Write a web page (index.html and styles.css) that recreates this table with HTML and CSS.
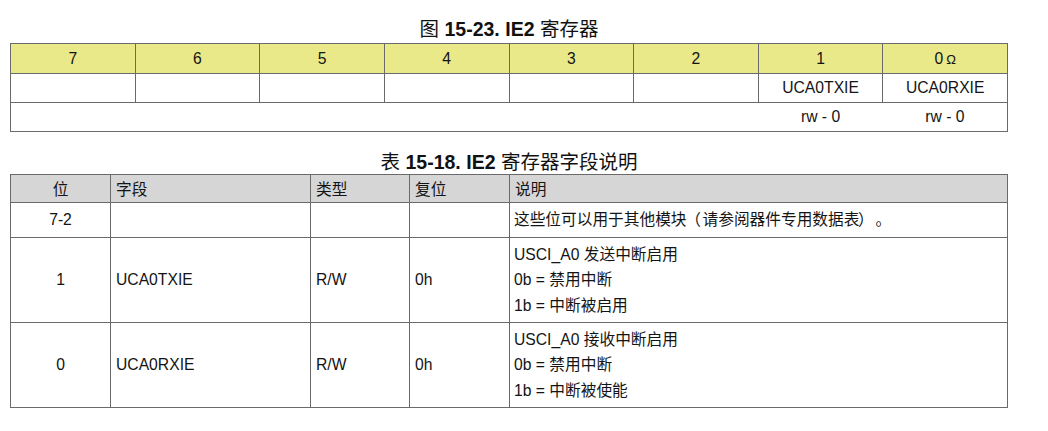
FILE: index.html
```html
<!DOCTYPE html>
<html lang="zh-CN">
<head>
<meta charset="utf-8">
<title>IE2 寄存器</title>
<link rel="stylesheet" href="styles.css">
</head>
<body>
<div class="page">
  <h2 class="caption caption-fig">图 <b>15-23. IE2</b> 寄存器</h2>
  <table class="reg">
    <colgroup>
      <col><col><col><col><col><col><col><col>
    </colgroup>
    <tr class="bits">
      <td>7</td><td>6</td><td>5</td><td>4</td><td>3</td><td>2</td><td>1</td><td>0<span class="ohm">Ω</span></td>
    </tr>
    <tr class="names">
      <td></td><td></td><td></td><td></td><td></td><td></td><td>UCA0TXIE</td><td>UCA0RXIE</td>
    </tr>
    <tr class="access">
      <td></td><td></td><td></td><td></td><td></td><td></td><td>rw - 0</td><td>rw - 0</td>
    </tr>
  </table>

  <h2 class="caption caption-tab">表 <b>15-18. IE2</b> 寄存器字段说明</h2>
  <table class="fields">
    <colgroup>
      <col class="c-bit"><col class="c-field"><col class="c-type"><col class="c-reset"><col class="c-desc">
    </colgroup>
    <thead>
      <tr>
        <th class="center">位</th><th>字段</th><th>类型</th><th>复位</th><th>说明</th>
      </tr>
    </thead>
    <tbody>
      <tr class="row-short">
        <td class="center">7-2</td><td></td><td></td><td></td><td class="desc">这些位可以用于其他模块<span class="paren">（</span>请参阅器件专用数据表<span class="paren">）</span>。</td>
      </tr>
      <tr class="row-tall">
        <td class="center">1</td><td>UCA0TXIE</td><td>R/W</td><td>0h</td>
        <td class="desc">USCI_A0 发送中断启用<br>0b = 禁用中断<br>1b = 中断被启用</td>
      </tr>
      <tr class="row-tall">
        <td class="center">0</td><td>UCA0RXIE</td><td>R/W</td><td>0h</td>
        <td class="desc">USCI_A0 接收中断启用<br>0b = 禁用中断<br>1b = 中断被使能</td>
      </tr>
    </tbody>
  </table>
</div>
</body>
</html>
```
FILE: styles.css
```css
html, body {
  margin: 0;
  padding: 0;
  background: #ffffff;
}

body {
  font-family: "Liberation Sans", "Noto Sans CJK SC", sans-serif;
  color: #141414;
  text-spacing-trim: space-all;
}

.page {
  width: 998px;
  padding: 17px 0 0 10px;
}

.caption {
  margin: 0;
  font-size: 19.5px;
  font-weight: normal;
  line-height: 24px;
  text-align: center;
  color: #111;
}

.caption b {
  font-weight: bold;
}

.caption-fig {
  margin-bottom: 2px;
}

.caption-tab {
  margin-top: 18px;
  margin-bottom: 0;
}

table {
  width: 998px;
  border-collapse: collapse;
  table-layout: fixed;
  font-size: 15.7px;
}

td, th {
  border: 1px solid #6a6a6a;
  padding: 0;
}

/* register map */
.reg {
  border: 1px solid #6a6a6a;
}

.reg td {
  text-align: center;
  vertical-align: middle;
}

.bits td {
  background: #e9e98a;
  height: 29px;
}

.ohm {
  font-size: 13px;
  margin-left: 3px;
}

.names td {
  height: 28px;
}

.access td {
  height: 28px;
  border-left: none;
  border-right: none;
}

/* field description table */
.fields {
  border: 1px solid #6a6a6a;
}

.c-bit { width: 100px; }
.c-field { width: 200px; }
.c-type { width: 99px; }
.c-reset { width: 100px; }
.c-desc { width: auto; }

.fields th {
  background: #d6d6d6;
  font-weight: normal;
  text-align: left;
  padding-left: 5px;
  height: 27px;
}

.fields td {
  text-align: left;
  padding-left: 5px;
  vertical-align: middle;
}

.fields th.center,
.fields td.center {
  text-align: center;
  padding-left: 0;
}

.row-short td {
  height: 34px;
}

.row-tall td {
  height: 84px;
}

.fields td.desc {
  padding: 0 4px;
  line-height: 25.5px;
}

.paren {
  display: inline-block;
  width: 16px;
  text-align: center;
  text-indent: -3px;
}
```
